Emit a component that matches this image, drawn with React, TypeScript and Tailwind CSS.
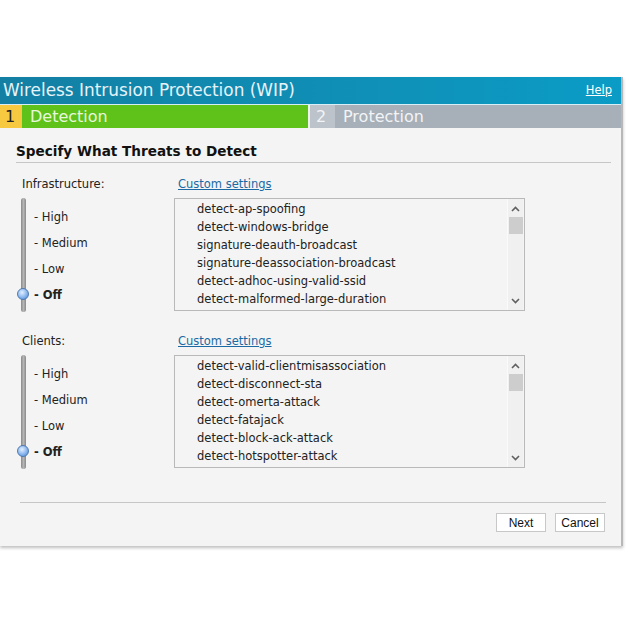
import React from "react";

const infra = [
  "detect-ap-spoofing",
  "detect-windows-bridge",
  "signature-deauth-broadcast",
  "signature-deassociation-broadcast",
  "detect-adhoc-using-valid-ssid",
  "detect-malformed-large-duration",
];
const clients = [
  "detect-valid-clientmisassociation",
  "detect-disconnect-sta",
  "detect-omerta-attack",
  "detect-fatajack",
  "detect-block-ack-attack",
  "detect-hotspotter-attack",
];

function Slider() {
  return (
    <div className="relative w-[150px] h-[114px] flex">
      <div className="w-[5px] ml-[21px] h-full rounded-full bg-gradient-to-r from-[#8a8a8a] via-[#b5b5b5] to-[#8a8a8a]" />
      <div className="absolute left-[17px] top-[90px] w-[12px] h-[12px] rounded-full border border-[#4f79b0] bg-[radial-gradient(circle_at_40%_35%,#e4f0ff,#7fb0ec_60%,#4a86d0)]" />
      <div className="flex flex-col pl-[8px] pt-[6px] text-[11.5px] text-[#222] leading-[26px]">
        <span>- High</span>
        <span>- Medium</span>
        <span>- Low</span>
        <span className="font-bold">- Off</span>
      </div>
    </div>
  );
}

function ListBox({ items }: { items: string[] }) {
  return (
    <div className="flex w-[351px] h-[113px] border border-[#b9b9b9] bg-[#f4f4f4]">
      <div className="flex-1 flex flex-col pl-[22px] pt-[1px] text-[11.5px] text-[#222] leading-[18px]">
        {items.map((t) => (
          <span key={t}>{t}</span>
        ))}
      </div>
      <div className="w-[16px] mr-[1px] flex flex-col items-center bg-[#f0f0f0] border-l border-[#fafafa]">
        <svg width="9" height="6" viewBox="0 0 9 6" className="mt-[7px]">
          <path d="M1 5 L4.5 1.5 L8 5" stroke="#606060" strokeWidth="1.6" fill="none" />
        </svg>
        <div className="w-[14px] h-[17px] bg-[#cdcdcd] mt-[5px]" />
        <div className="flex-1" />
        <svg width="9" height="6" viewBox="0 0 9 6" className="mb-[6px]">
          <path d="M1 1 L4.5 4.5 L8 1" stroke="#606060" strokeWidth="1.6" fill="none" />
        </svg>
      </div>
    </div>
  );
}

export default function App() {
  return (
    <div className="w-[627px] h-[627px] bg-white overflow-hidden" style={{ fontFamily: "'DejaVu Sans', Verdana, sans-serif" }}>
      <div className="h-[77px]" />
      <div className="w-[623px] h-[469px] flex flex-col bg-[#f4f4f4] border-r-2 border-[#b8b8b8] shadow-[0_2px_3px_rgba(0,0,0,0.25)]">
        <div className="h-[27px] flex items-center justify-between bg-gradient-to-r from-[#137fa3] to-[#0a9cc6] pl-[3px] pr-[9px]">
          <span className="text-[16.9px] text-[#e6f3f9] leading-none">Wireless Intrusion Protection (WIP)</span>
          <span className="text-[11.5px] text-white underline">Help</span>
        </div>
        <div className="h-[1px] bg-[#d8eef6]" />
        <div className="h-[23px] flex text-[16px] leading-[23px]">
          <div className="w-[22px] bg-[#f7c941] text-[#222] pl-[5px]">1</div>
          <div className="w-[286px] bg-[#5ec21a] text-[#e8f7dc] pl-[8px]">Detection</div>
          <div className="w-[2px] bg-[#eef3ea]" />
          <div className="w-[25px] bg-[#bcc3ca] text-[#f2f4f6] pl-[6px]">2</div>
          <div className="flex-1 bg-[#a7afb8] text-[#f2f4f6] pl-[8px]">Protection</div>
        </div>
        <div className="flex flex-col px-[16px] pt-[14px]">
          <div className="text-[13.6px] font-bold text-[#111] leading-[18px] pb-[2px] border-b border-[#c6c6c6] mr-[-6px]">
            Specify What Threats to Detect
          </div>
          <div className="flex flex-col pl-[6px] pt-[14px] gap-[22px]">
            {[
              { label: "Infrastructure:", items: infra },
              { label: "Clients:", items: clients },
            ].map((g) => (
              <div key={g.label} className="flex flex-col">
                <div className="flex text-[11.5px] leading-[14px] text-[#222] mb-[6px]">
                  <span className="w-[156px]">{g.label}</span>
                  <span className="text-[#1b6aa3] underline">Custom settings</span>
                </div>
                <div className="flex mt-[1px]">
                  <div className="ml-[-22px] w-[174px]">
                    <Slider />
                  </div>
                  <ListBox items={g.items} />
                </div>
              </div>
            ))}
          </div>
          <div className="h-[1px] bg-[#c6c6c6] ml-[4px] mr-[-1px] mt-[33px]" />
          <div className="flex justify-end gap-[9px] mt-[10px] mr-0" style={{ fontFamily: "'Liberation Sans', Arial, sans-serif" }}>
            <button className="w-[50px] h-[19px] border border-[#c8c8c8] bg-white text-[12px] text-[#111] leading-none">Next</button>
            <button className="w-[50px] h-[19px] border border-[#c8c8c8] bg-white text-[12px] text-[#111] leading-none">Cancel</button>
          </div>
        </div>
      </div>
    </div>
  );
}
